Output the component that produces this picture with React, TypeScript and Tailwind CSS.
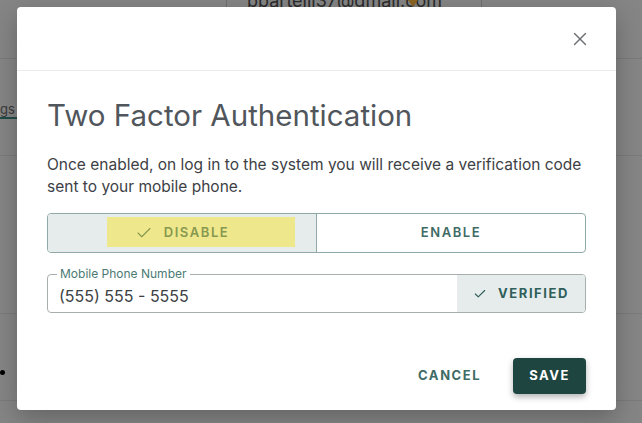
import { Check, X } from "lucide-react"

function PageBehind() {
  return (
    <div className="absolute inset-0 bg-[#858585]">
      <div className="absolute left-[226px] top-0 h-[8px] w-px bg-[#6f6f6f]" />
      <div className="absolute left-[481px] top-0 h-[8px] w-px bg-[#6f6f6f]" />
      <div className="absolute left-[247px] top-[-10px] text-[18px] leading-[22px] text-[#2b2b2b]">pbartelli37@gmail.com</div>
      <div className="absolute left-[408px] top-0 h-0 w-0 border-x-[5px] border-t-[7px] border-x-transparent border-t-[#8a6420]" />
      <div className="absolute left-0 right-0 top-[58px] h-px bg-[#7a7a7a]" />
      <div className="absolute left-0 top-[100px] text-[13px] text-[#3a3a3a]">gs</div>
      <div className="absolute left-0 top-[117px] h-[2px] w-[17px] bg-[#1f4d47]" />
      <div className="absolute left-0 right-0 top-[155px] h-px bg-[#7a7a7a]" />
      <div className="absolute left-0 right-0 top-[313px] h-px bg-[#7a7a7a]" />
      <div className="absolute left-[0px] top-[370px] h-[5px] w-[5px] rounded-full bg-black" />
      <div className="absolute left-0 right-0 top-[400px] h-px bg-[#7a7a7a]" />
    </div>
  )
}

export default function App() {
  return (
    <div className="relative h-[423px] w-[642px] overflow-hidden font-['Inter',sans-serif]">
      <PageBehind />
      <div className="relative pl-[17px] pt-[7px]">
        <div className="flex h-[403px] w-[599px] flex-col rounded-[4px] bg-white shadow-[0_8px_24px_rgba(0,0,0,0.25)]">
          <div className="flex h-[64px] items-center justify-end border-b border-[#ebebeb] pr-[25px]">
            <X className="h-[22px] w-[22px] text-[#6b6f72]" strokeWidth={1.5} />
          </div>

          <div className="flex flex-1 flex-col px-[30px] pb-[16px]">
            <h2 className="mt-[26px] text-[29.5px] leading-[36px] text-[#50565b]">Two Factor Authentication</h2>
            <p className="mt-[21px] text-[15.5px] leading-[22px] text-[#3d4145]">
              Once enabled, on log in to the system you will receive a verification code sent to your mobile phone.
            </p>

            <div className="mt-[15px] flex h-[40px] overflow-hidden rounded-[4px] border border-[#8fa9a6]">
              <div className="relative flex w-[269px] items-center justify-center border-r border-[#8fa9a6] bg-[#e6ecec]">
                <div className="absolute left-[59px] top-[3px] h-[30px] w-[188px] bg-[#efe78b]" />
                <div className="relative flex items-center gap-[11px] text-[#879850]">
                  <Check className="h-[18px] w-[18px]" strokeWidth={1.5} />
                  <span className="text-[13px] font-semibold tracking-[0.12em]">DISABLE</span>
                </div>
              </div>
              <div className="flex flex-1 items-center justify-center text-[13px] font-semibold tracking-[0.12em] text-[#3f6b66]">
                ENABLE
              </div>
            </div>

            <div className="relative mt-[21px] flex h-[39px] rounded-[4px] border border-[#a8aeae]">
              <span className="absolute left-[9px] top-[-8px] bg-white px-[3px] text-[12px] leading-[14px] text-[#4b7a74]">
                Mobile Phone Number
              </span>
              <div className="flex flex-1 items-center pl-[11px] pt-[4px] text-[16px] text-[#3d4145]">(555) 555 - 5555</div>
              <div className="flex w-[128px] items-center justify-center gap-[11px] rounded-r-[3px] bg-[#e6ecec] text-[#2f5f5a]">
                <Check className="h-[14px] w-[14px]" strokeWidth={2} />
                <span className="text-[13px] font-bold tracking-[0.12em]">VERIFIED</span>
              </div>
            </div>

            <div className="mt-auto flex items-center justify-end gap-[32px]">
              <span className="text-[13px] font-bold tracking-[0.12em] text-[#3f6b66]">CANCEL</span>
              <div className="flex h-[36px] items-center rounded-[4px] bg-[#1f4541] px-[16px] text-[13px] font-bold tracking-[0.12em] text-white shadow-[0_3px_6px_rgba(0,0,0,0.3)]">
                SAVE
              </div>
            </div>
          </div>
        </div>
      </div>
    </div>
  )
}
